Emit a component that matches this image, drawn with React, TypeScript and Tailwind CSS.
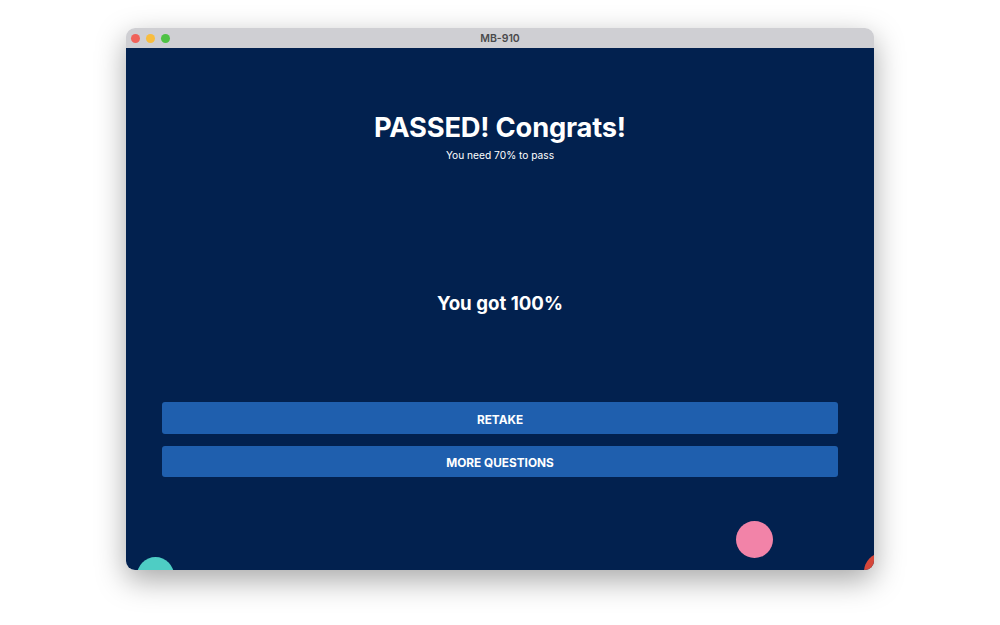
import * as React from 'react';

export default function App() {
  return (
    <div className="w-[1000px] h-[625px] bg-white flex justify-center pt-[28px]" style={{ fontFamily: 'Inter, "Liberation Sans", Arial, sans-serif' }}>
      <div className="w-[748px] h-[542px] rounded-[9px] overflow-hidden flex flex-col shadow-[0_10px_30px_rgba(0,0,0,0.35)]">
        {/* Title bar */}
        <div className="h-[20px] bg-[#cfcfd3] relative flex items-center justify-center shrink-0">
          <div className="absolute left-[5px] top-[6px] flex gap-[6px]">
            <span className="w-[9px] h-[9px] rounded-full bg-[#f0625a]" />
            <span className="w-[9px] h-[9px] rounded-full bg-[#f8bd3e]" />
            <span className="w-[9px] h-[9px] rounded-full bg-[#4fc244]" />
          </div>
          <span className="pt-[1px] text-[10.5px] font-semibold text-[#4a4a4c]">MB-910</span>
        </div>

        {/* Content */}
        <div className="flex-1 bg-[#02214f] relative overflow-hidden flex flex-col items-center">
          <h1 className="mt-[64px] text-[27.3px] leading-[32px] font-bold text-white tracking-[-0.2px]">PASSED! Congrats!</h1>
          <p className="mt-[4px] text-[10.2px] leading-[14px] text-white">You need 70% to pass</p>

          <p className="mt-[130px] text-[18.7px] leading-[24px] font-bold text-white">You got 100%</p>

          <div className="mt-[86px] w-full px-[36px] flex flex-col gap-[12px]">
            <button className="h-[32px] w-full rounded-[3px] bg-[#1f5fae] text-white text-[11.8px] leading-[14px] font-bold pt-[3px]">RETAKE</button>
            <button className="h-[31px] w-full rounded-[3px] bg-[#1f5fae] text-white text-[11.8px] leading-[14px] font-bold pt-[2px]">MORE QUESTIONS</button>
          </div>

          {/* confetti */}
          <span className="absolute left-[11px] top-[509px] w-[37px] h-[37px] rounded-full bg-[#4ecdc4]" />
          <span className="absolute left-[610px] top-[473px] w-[37px] h-[37px] rounded-full bg-[#f283a8]" />
          <span className="absolute left-[738px] top-[505px] w-[37px] h-[37px] rounded-full bg-[#d6473a]" />
        </div>
      </div>
    </div>
  );
}
